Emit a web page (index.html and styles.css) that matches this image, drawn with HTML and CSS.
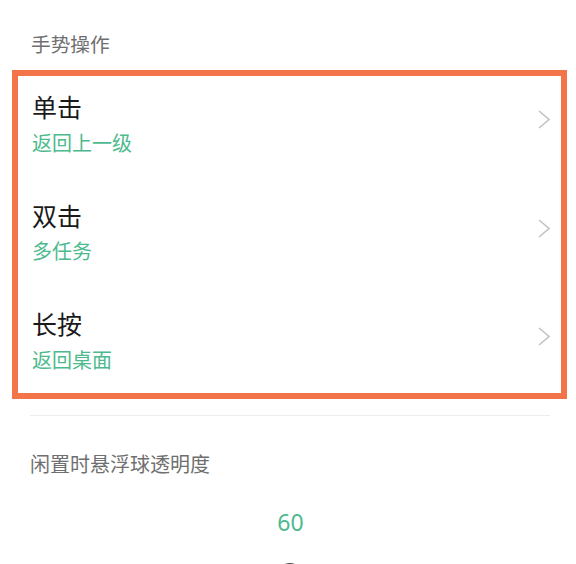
FILE: index.html
```html
<!DOCTYPE html>
<html lang="zh-CN">

<head>
    <meta charset="UTF-8">
    <meta name="viewport" content="width=device-width, initial-scale=1.0">
    <title>悬浮球设置</title>
    <link rel="stylesheet" href="styles.css">
</head>

<body>
    <div class="pagina">
        <div class="secao__titulo">手势操作</div>

        <div class="gestos">
            <div class="gesto">
                <div class="gesto__texto">
                    <div class="gesto__nome">单击</div>
                    <div class="gesto__acao">返回上一级</div>
                </div>
                <svg class="gesto__seta" width="12" height="19" viewBox="0 0 12 19">
                    <polyline points="1,1 11,9.5 1,18" fill="none" stroke="#c2c2c2" stroke-width="1.5" />
                </svg>
            </div>
            <div class="gesto">
                <div class="gesto__texto">
                    <div class="gesto__nome">双击</div>
                    <div class="gesto__acao">多任务</div>
                </div>
                <svg class="gesto__seta" width="12" height="19" viewBox="0 0 12 19">
                    <polyline points="1,1 11,9.5 1,18" fill="none" stroke="#c2c2c2" stroke-width="1.5" />
                </svg>
            </div>
            <div class="gesto">
                <div class="gesto__texto">
                    <div class="gesto__nome">长按</div>
                    <div class="gesto__acao">返回桌面</div>
                </div>
                <svg class="gesto__seta" width="12" height="19" viewBox="0 0 12 19">
                    <polyline points="1,1 11,9.5 1,18" fill="none" stroke="#c2c2c2" stroke-width="1.5" />
                </svg>
            </div>
        </div>

        <div class="divisor"></div>

        <div class="secao__titulo secao__titulo-opacidade">闲置时悬浮球透明度</div>

        <div class="opacidade__valor">60</div>
        <div class="opacidade__trilho">
            <div class="opacidade__botao"></div>
        </div>
    </div>
</body>

</html>
```

FILE: styles.css
```css
body {
    margin: 0;
    background-color: #ffffff;
    font-family: "Noto Sans CJK SC", "Noto Sans", sans-serif;
    overflow: hidden;
}

.pagina {
    padding-top: 30px;
}

.secao__titulo {
    padding-left: 31px;
    font-size: 19.7px;
    line-height: 28px;
    color: #6f6f6f;
}

.secao__titulo-opacidade {
    padding-left: 30px;
    margin-top: 34px;
    font-size: 20px;
}

.gestos {
    margin: 12px 9px 0 12px;
    border: 6px solid #f27448;
    padding: 15px 11px 20px 14px;
    display: flex;
    flex-direction: column;
    gap: 44px;
}

.gesto {
    display: flex;
    justify-content: space-between;
    align-items: center;
}

.gesto__nome {
    font-size: 25px;
    line-height: 30px;
    color: #1a1a1a;
}

.gesto__acao {
    margin-top: 8.5px;
    font-size: 20px;
    line-height: 26px;
    color: #4dba8e;
}

.gesto__seta {
    margin-bottom: 7px;
}

.divisor {
    margin: 16px 26px 0 30px;
    height: 1px;
    background-color: #ececec;
}

.opacidade__valor {
    margin-top: 29.5px;
    padding-left: 5px;
    text-align: center;
    font-family: "Noto Sans", sans-serif;
    font-size: 23px;
    line-height: 30px;
    color: #4dba8e;
}

.opacidade__trilho {
    margin-top: 25.5px;
    display: flex;
    justify-content: center;
    padding-left: 4px;
}

.opacidade__botao {
    width: 22px;
    height: 22px;
    border-radius: 50%;
    background-color: #444444;
}
```
